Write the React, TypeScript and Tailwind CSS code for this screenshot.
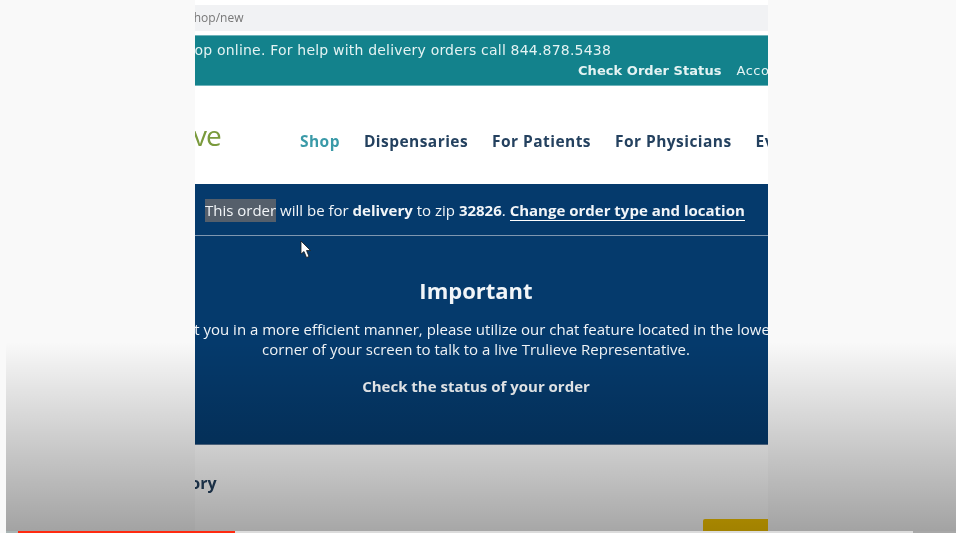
const openSans = "font-['Open_Sans',sans-serif]";

const navLinks = ["Dispensaries", "For Patients", "For Physicians", "Events"];

const Cursor = () => (
  <svg className="absolute left-[300px] top-[240px]" width="12" height="19" viewBox="0 0 12 19">
    <path d="M1 1 L1 14 L4 11.5 L6.5 17.5 L9 16.5 L6.5 10.5 L10.5 10.5 Z" fill="#fff" stroke="#1a1a1a" strokeWidth="0.8" />
  </svg>
);

const App = () => {
  return (
    <div className="relative w-[956px] h-[533px] overflow-hidden bg-[#f9f9f9]">
      {/* recorded browser page */}
      <div className={`${openSans} ml-[195px] w-[573px] h-[533px] overflow-hidden flex flex-col bg-white blur-[0.5px]`}>
        <div className="h-[5px] shrink-0" />
        <div className="h-[26px] shrink-0 bg-[#f1f2f4] flex items-center justify-end overflow-hidden">
          <div className="w-full flex">
            <span className="-ml-[7px] text-[12px] text-[#777]">shop/new</span>
          </div>
        </div>
        <div className="h-[4px] shrink-0" />

        <div className="h-[51px] shrink-0 bg-[#13828c] border-y border-[#6fb3ba] text-[#e4f3f3] font-['DejaVu_Sans',sans-serif] overflow-hidden">
          <div className="w-[416px] flex justify-end whitespace-nowrap text-[14px] leading-[18px] mt-[5px] tracking-[0.2px]">
            <span>Shop online. For help with delivery orders call 844.878.5438</span>
          </div>
          <div className="flex gap-[15px] whitespace-nowrap text-[13px] leading-[18px] mt-[3px] ml-[383px]">
            <span className="font-bold tracking-[0.05px]">Check Order Status</span>
            <span className="tracking-[0.5px]">Account</span>
          </div>
        </div>

        <div className="h-[98px] shrink-0 flex items-center whitespace-nowrap pt-[14px]">
          <div className="w-[105px] shrink-0 -mt-[14px] flex justify-start overflow-hidden">
            <span className="text-[28px] leading-none text-[#7a9a3c] -ml-[2px] tracking-[-1px]">ve</span>
          </div>
          <div className="flex gap-[24px] text-[15.5px] font-bold tracking-[0.45px]">
            <span className="text-[#3a9aa8]">Shop</span>
            {navLinks.map((link) => (
              <span key={link} className="text-[#24415f]">
                {link}
              </span>
            ))}
          </div>
        </div>

        <div className="h-[261px] shrink-0 bg-[#053a6c] text-[#f2f5f8] border-b border-[#5b7694]">
          <div className="h-[52px] border-b border-[#7f97b0] pl-[10px] pt-[15px] whitespace-nowrap text-[15px] leading-[23px]">
            <span className="inline-block bg-[#555f6b]">This order</span> will be for <b>delivery</b> to zip <b>32826</b>.{" "}
            <b className="border-b border-white">Change order type and location</b>
          </div>
          <div className="pr-[11px] flex flex-col items-center whitespace-nowrap">
            <h1 className="text-[22px] leading-[28px] font-bold mt-[40px]">Important</h1>
            <p className="text-[15px] leading-[20px] mt-[15px]">
              To assist you in a more efficient manner, please utilize our chat feature located in the lower right
            </p>
            <p className="text-[15px] leading-[20px]">
              corner of your screen to talk to a live Trulieve Representative.
            </p>
            <p className="text-[15px] leading-[20px] font-bold mt-[17px]">Check the status of your order</p>
          </div>
        </div>

        <div className="flex-1 relative">
          <p className="absolute -left-[50px] top-[27px] text-[16px] leading-[22px] font-bold text-[#24415f]">Category</p>
          <div className="absolute right-0 bottom-0 w-[65px] h-[14px] bg-[#f7c600] rounded-tl-[2px]" />
        </div>
      </div>

      <Cursor />

      {/* player controls shade and progress bar */}
      <div className="absolute left-[6px] right-0 top-[342px] bottom-0 bg-gradient-to-b from-black/0 to-black/35" />
      <div className="absolute left-[6px] right-0 bottom-0 h-[2px] flex">
        <div className="w-[12px] bg-[#a9b4b4]" />
        <div className="w-[217px] bg-[#ff2a10]" />
        <div className="w-[678px] bg-[#dcdcdc]" />
        <div className="flex-1 bg-[#a8a8a8]" />
      </div>
    </div>
  );
};

export default App;
